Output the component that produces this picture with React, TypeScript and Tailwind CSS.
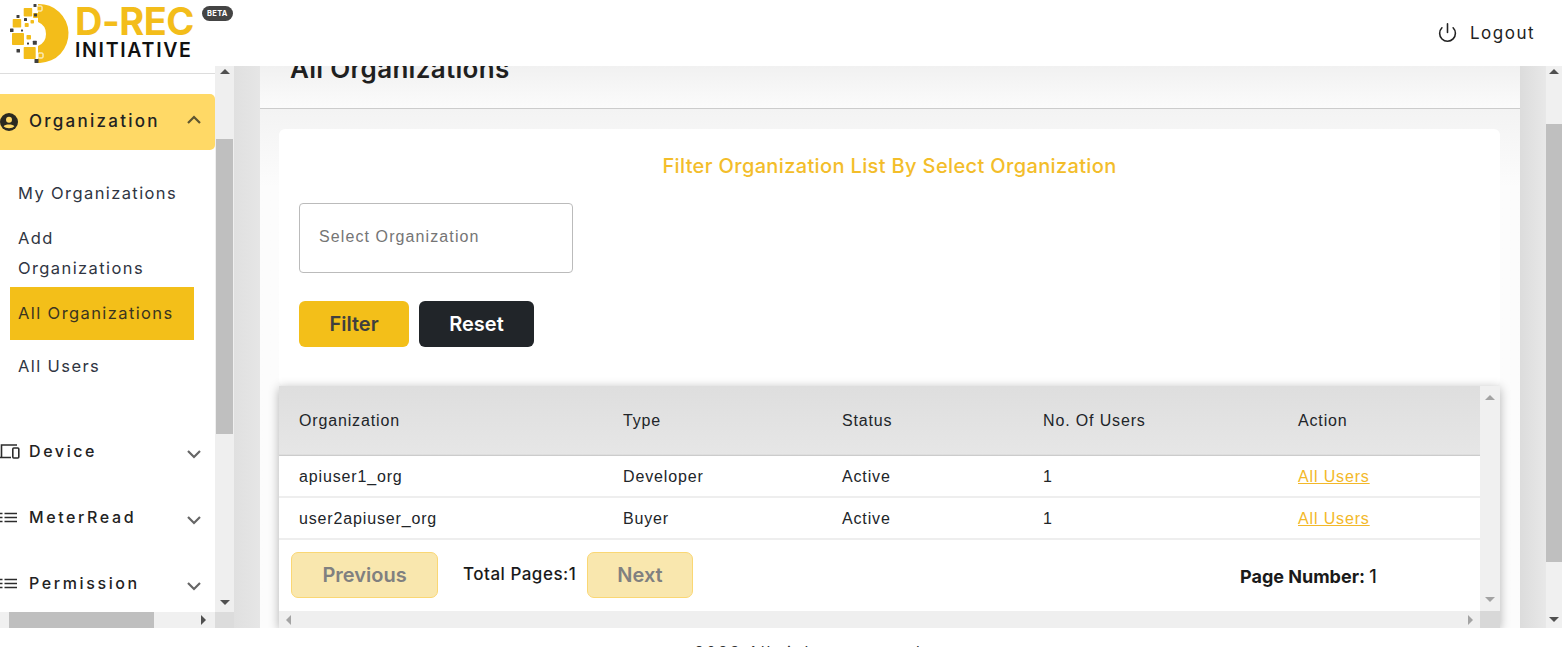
import React from 'react';
import { Power } from 'lucide-react';

const poppins = "font-['Inter',sans-serif]";

type Dir = 'up' | 'down' | 'left' | 'right';

function Arrow({ dir, dark }: { dir: Dir; dark?: boolean }) {
  const points = {
    up: '0,8 5,3 10,8',
    down: '0,2 5,7 10,2',
    left: '7,0 2,5 7,10',
    right: '3,0 8,5 3,10',
  }[dir];
  return (
    <svg width="10" height="10" viewBox="0 0 10 10" className="shrink-0">
      <polygon points={points} fill={dark ? '#505050' : '#a3a3a3'} />
    </svg>
  );
}

function LogoMark() {
  const yellow = [
    [21.7, 7, 8.5], [10.7, 18, 8.5], [10, 32, 12], [21.7, 46, 12], [31, 12, 5],
    [22.7, 22, 4], [28.5, 19, 3.5], [24.5, 34, 4.5], [35, 5, 5], [36, 52, 5],
  ];
  const dark = [
    [31.5, 3, 3], [14.5, 14, 3], [22, 17, 3], [32, 12.5, 3], [8, 27.5, 3.5], [19, 28.5, 2],
    [30.8, 39.8, 4], [25, 41.5, 2], [14.5, 48, 3.5], [32.5, 58, 4],
  ];
  return (
    <svg width="68" height="64" viewBox="0 0 68 64" className="shrink-0">
      <path d="M36 3 A29.5 29.5 0 0 1 38 62 L36 62 L36 45 A13 13 0 0 0 36 21 Z" fill="#f3bd1a" />
      {yellow.map(([x, y, s], i) => (
        <rect key={i} x={x} y={y} width={s} height={s} rx="0.8" fill="#f3bd1a" stroke="#fff" strokeWidth={i > 7 ? 1 : 0} />
      ))}
      {dark.map(([x, y, s], i) => (
        <rect key={i} x={x} y={y} width={s} height={s} rx="0.5" fill="#3f3f3f" />
      ))}
    </svg>
  );
}

function Chevron({ up }: { up?: boolean }) {
  return (
    <svg width="16" height="10" viewBox="0 0 16 10" className="shrink-0">
      <path d={up ? 'M2 8 L8 2 L14 8' : 'M2 2 L8 8 L14 2'} fill="none" stroke={up ? '#5f5630' : '#666'} strokeWidth="2.2" />
    </svg>
  );
}

function ListIcon() {
  return (
    <svg width="17" height="11" viewBox="0 0 17 11" className="shrink-0">
      <path d="M0 1.5 H2.5 M4.5 1.5 H17 M0 5.5 H2.5 M4.5 5.5 H17 M0 9.5 H2.5 M4.5 9.5 H17" stroke="#2c2c2c" strokeWidth="1.6" />
    </svg>
  );
}

function DeviceIcon() {
  return (
    <svg width="20" height="16" viewBox="0 0 20 16" className="shrink-0">
      <path d="M1.5 14 V2 H17 M0 14.5 H11" fill="none" stroke="#2c2c2c" strokeWidth="1.6" />
      <rect x="12.8" y="5" width="6" height="10" rx="1" fill="none" stroke="#2c2c2c" strokeWidth="1.6" />
    </svg>
  );
}

function AccountIcon() {
  return (
    <svg width="18" height="18" viewBox="0 0 18 18" className="shrink-0">
      <circle cx="9" cy="9" r="9" fill="#2b2a20" />
      <circle cx="9" cy="6.8" r="3" fill="#ffd966" />
      <path d="M3.6 13.2 C5 10.8 13 10.8 14.4 13.2 C12.5 15.8 5.5 15.8 3.6 13.2 Z" fill="#ffd966" />
    </svg>
  );
}

function MenuRow({ icon, label, className }: { icon: React.ReactNode; label: string; className: string }) {
  return (
    <div className={`flex h-[24px] items-center ${className}`}>
      <span className="flex w-[29px] shrink-0">{icon}</span>
      <span className="flex-1 text-[16px] font-medium tracking-[2.6px] text-[#222]">{label}</span>
      <span className="mr-[13px] mt-[6px]"><Chevron /></span>
    </div>
  );
}

function Sidebar() {
  return (
    <div className={`flex w-[234px] shrink-0 flex-col ${poppins}`}>
      <div className="flex h-[546px] shrink-0">
        <div className="w-[215px] shrink-0 overflow-hidden bg-white">
          <div className="h-[8px] border-b border-[#ddd]" />
          <div className="mt-[20px] flex h-[56px] items-center rounded-r-[5px] bg-[#ffd966]">
            <span className="flex w-[29px] shrink-0"><AccountIcon /></span>
            <span className="flex-1 text-[17px] font-medium tracking-[2.25px] text-[#222]">Organization</span>
            <span className="mb-[4px] mr-[13px]"><Chevron up /></span>
          </div>
          <div className="pt-[30px] text-[16.5px] tracking-[1.4px] text-[#2f3542]">
            <p className="pl-[18px] leading-[26px]">My Organizations</p>
            <p className="mt-[17px] pl-[18px] leading-[30px]">Add<br />Organizations</p>
            <p className="ml-[10px] mt-[4px] flex h-[53px] w-[184px] items-center bg-[#f3bf19] pl-[8px] text-[#3a3420]">All Organizations</p>
            <p className="mt-[13px] pl-[18px] leading-[26px]">All Users</p>
          </div>
          <MenuRow icon={<DeviceIcon />} label="Device" className="mt-[60px]" />
          <MenuRow icon={<ListIcon />} label="MeterRead" className="mt-[42px]" />
          <MenuRow icon={<ListIcon />} label="Permission" className="mt-[42px]" />
        </div>
        <div className="flex w-[19px] shrink-0 flex-col items-center bg-[#efefef]">
          <Arrow dir="up" dark />
          <div className="mt-[63px] h-[295px] w-[17px] bg-[#bfbfbf]" />
          <div className="mt-auto mb-[4px]"><Arrow dir="down" dark /></div>
        </div>
      </div>
      <div className="flex h-[16px] shrink-0">
        <div className="flex w-[215px] items-center bg-[#f0f0f0]">
          <div className="ml-[9px] h-full w-[145px] bg-[#bfbfbf]" />
          <span className="ml-auto mr-[7px] flex"><Arrow dir="right" dark /></span>
        </div>
        <div className="w-[19px] bg-[#dcdcdc]" />
      </div>
    </div>
  );
}

function OrgTable() {
  const rows = [
    ['apiuser1_org', 'Developer', 'Active', '1'],
    ['user2apiuser_org', 'Buyer', 'Active', '1'],
  ];
  return (
    <div className="flex h-[242px] flex-col shadow-[0_2px_10px_rgba(0,0,0,0.3)]">
      <div className="flex min-h-0 flex-1">
        <div className="min-w-0 flex-1 bg-white">
          <table className="w-full table-fixed border-collapse font-['Liberation_Sans',sans-serif] text-[16px] tracking-[0.85px] text-[#212529]">
            <thead>
              <tr className="h-[69px] border-b border-[#ccc] bg-gradient-to-b from-[#dedede] to-[#e6e6e6] text-left">
                <th className="w-[344px] pl-[20px] pt-[2px] font-normal">Organization</th>
                <th className="w-[219px] pt-[2px] font-normal">Type</th>
                <th className="w-[201px] pt-[2px] font-normal">Status</th>
                <th className="w-[255px] pt-[2px] font-normal">No. Of Users</th>
                <th className="pt-[2px] font-normal">Action</th>
              </tr>
            </thead>
            <tbody>
              {rows.map((r) => (
                <tr key={r[0]} className="h-[42px] border-b-2 border-[#eee]">
                  <td className="pl-[20px] pt-[2px]">{r[0]}</td>
                  <td className="pt-[2px]">{r[1]}</td>
                  <td className="pt-[2px]">{r[2]}</td>
                  <td className="pt-[2px]">{r[3]}</td>
                  <td className="pt-[2px]"><a href="#" className="text-[#f3b829] underline">All Users</a></td>
                </tr>
              ))}
            </tbody>
          </table>
          <div className={`flex h-[71px] items-center pb-[2px] ${poppins}`}>
            <button className="ml-[12px] h-[46px] w-[147px] rounded-[7px] border border-[#fad774] bg-[#f9e7ae] text-[20px] font-semibold text-[#808080]">Previous</button>
            <span className="ml-[25px] w-[124px] text-[17px] font-medium tracking-[0.5px] whitespace-nowrap text-[#1a1a1a]">Total Pages:1</span>
            <button className="h-[46px] w-[106px] rounded-[7px] border border-[#fad774] bg-[#f9e7ae] text-[20px] font-semibold text-[#808080]">Next</button>
            <span className="ml-[547px] mt-[3px] text-[18px] font-bold whitespace-nowrap text-[#1a1a1a]">Page Number: <span className="font-medium">1</span></span>
          </div>
        </div>
        <div className="flex w-[20px] shrink-0 flex-col items-center justify-between bg-[#f0f0f0] py-[6px]">
          <Arrow dir="up" />
          <Arrow dir="down" />
        </div>
      </div>
      <div className="flex h-[17px] shrink-0">
        <div className="flex flex-1 items-center justify-between bg-[#efefef] px-[5px]">
          <Arrow dir="left" />
          <Arrow dir="right" />
        </div>
        <div className="w-[20px] bg-[#d8d8d8]" />
      </div>
    </div>
  );
}

function Panel() {
  return (
    <div className={`flex w-[1260px] shrink-0 flex-col overflow-hidden ${poppins}`}>
      <div className="flex h-[43px] shrink-0 items-end border-b border-[#ccc] bg-gradient-to-b from-[#f1f1f1] to-[#fbfbfb] pb-[24px] pl-[30px]">
        <h1 className="text-[26px] leading-[30px] font-semibold tracking-[0.3px] text-[#1f1f1f]">All Organizations</h1>
      </div>
      <div className="flex-1 bg-gradient-to-b from-[#f3f3f3] to-[#fcfcfc] to-[15%] pl-[19px] pr-[20px] pt-[20px]">
        <div className="h-[257px] rounded-[6px] bg-white px-[20px] pt-[24px]">
          <h2 className="text-center text-[20px] leading-[26px] font-medium tracking-[0.36px] text-[#f3bd2a]">Filter Organization List By Select Organization</h2>
          <div className="mt-[24px] flex h-[70px] w-[274px] items-center rounded-[4px] border border-[#bbb] pb-[3px] pl-[19px] font-['Liberation_Sans',sans-serif] text-[16px] tracking-[1.1px] text-[#757575]">Select Organization</div>
          <div className="mt-[28px] flex gap-[10px]">
            <button className="h-[46px] w-[110px] rounded-[6px] bg-[#f3bf19] text-[20px] font-semibold text-[#3f3f3f]">Filter</button>
            <button className="h-[46px] w-[115px] rounded-[6px] bg-[#212529] text-[20px] font-semibold text-white">Reset</button>
          </div>
        </div>
        <OrgTable />
      </div>
    </div>
  );
}

export default function App() {
  return (
    <div className="flex h-[647px] w-[1562px] flex-col overflow-hidden bg-white">
      <header className={`flex h-[66px] shrink-0 items-start bg-white ${poppins}`}>
        <div className="ml-[2px] mt-[1px]"><LogoMark /></div>
        <div className="ml-[5px] flex flex-col">
          <span className="mt-[2px] text-[38px] leading-[38px] font-bold tracking-[-0.5px] whitespace-nowrap text-[#f3bd1a]">D-REC</span>
          <span className="text-[19.5px] leading-[20px] font-semibold tracking-[1.7px] text-[#111]">INITIATIVE</span>
        </div>
        <span className="ml-[8px] mt-[6px] flex h-[15px] w-[31px] items-center justify-center rounded-full bg-[#444] text-[7.5px] font-bold tracking-[0.3px] text-white">BETA</span>
        <div className="ml-auto mr-[27px] mt-[21px] flex items-center gap-[12px] text-[17px] tracking-[1.5px] text-[#222]">
          <Power size={21} strokeWidth={1.8} color="#222" className="-mt-[3px]" />
          <span>Logout</span>
        </div>
      </header>
      <main className="flex h-[562px] shrink-0">
        <Sidebar />
        <div className="w-[26px] shrink-0 bg-gradient-to-r from-[#e0e0e0] to-[#e6e6e6]" />
        <Panel />
        <div className="w-[26px] shrink-0 bg-gradient-to-r from-[#dcdcdc] to-[#e8e8e8]" />
        <div className="flex w-[16px] shrink-0 flex-col items-center bg-[#f0f0f0]">
          <Arrow dir="up" dark />
          <div className="mt-[48px] h-[438px] w-full bg-[#bfbfbf]" />
          <div className="mt-auto mb-[3px]"><Arrow dir="down" dark /></div>
        </div>
      </main>
      <footer className={`shrink-0 pl-[54px] pt-[14px] text-center text-[16px] leading-[20px] tracking-[1.9px] text-[#333] ${poppins}`}>2023 All rights reserved</footer>
    </div>
  );
}
